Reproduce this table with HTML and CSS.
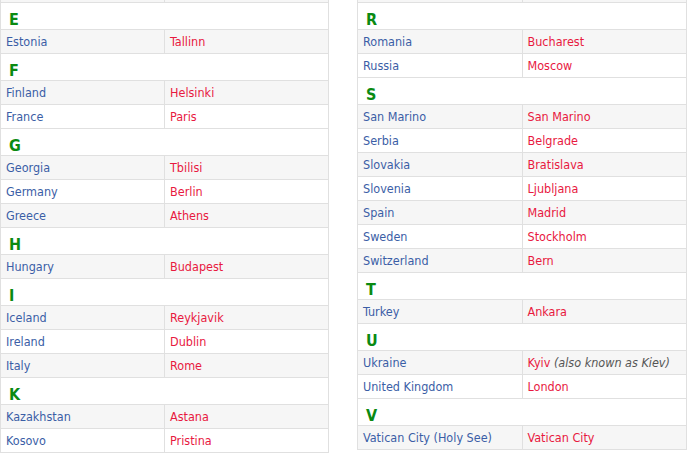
FILE: index.html
```html
<!DOCTYPE html>
<html>
<head>
<meta charset="utf-8">
<link rel="stylesheet" href="styles.css">
</head>
<body>
<div class="page">
  <table class="caps">
    <tbody>
      <tr class="alt"><td class="country"></td><td class="capital"></td></tr>
    </tbody>
    <tbody>
      <tr class="letter"><th colspan="2">E</th></tr>
      <tr class="alt"><td class="country">Estonia</td><td class="capital">Tallinn</td></tr>
    </tbody>
    <tbody>
      <tr class="letter"><th colspan="2">F</th></tr>
      <tr class="alt"><td class="country">Finland</td><td class="capital">Helsinki</td></tr>
      <tr class="strong"><td class="country">France</td><td class="capital">Paris</td></tr>
    </tbody>
    <tbody>
      <tr class="letter"><th colspan="2">G</th></tr>
      <tr class="alt"><td class="country">Georgia</td><td class="capital">Tbilisi</td></tr>
      <tr><td class="country">Germany</td><td class="capital">Berlin</td></tr>
      <tr class="alt strong"><td class="country">Greece</td><td class="capital">Athens</td></tr>
    </tbody>
    <tbody>
      <tr class="letter"><th colspan="2">H</th></tr>
      <tr class="alt"><td class="country">Hungary</td><td class="capital">Budapest</td></tr>
    </tbody>
    <tbody>
      <tr class="letter"><th colspan="2">I</th></tr>
      <tr class="alt strong"><td class="country">Iceland</td><td class="capital">Reykjavik</td></tr>
      <tr><td class="country">Ireland</td><td class="capital">Dublin</td></tr>
      <tr class="alt"><td class="country">Italy</td><td class="capital">Rome</td></tr>
    </tbody>
    <tbody>
      <tr class="letter"><th colspan="2">K</th></tr>
      <tr class="alt strong"><td class="country">Kazakhstan</td><td class="capital">Astana</td></tr>
      <tr><td class="country">Kosovo</td><td class="capital">Pristina</td></tr>
    </tbody>
  </table>

  <table class="caps">
    <tbody>
      <tr class="alt"><td class="country"></td><td class="capital"></td></tr>
    </tbody>
    <tbody>
      <tr class="letter"><th colspan="2">R</th></tr>
      <tr class="alt"><td class="country">Romania</td><td class="capital">Bucharest</td></tr>
      <tr><td class="country">Russia</td><td class="capital">Moscow</td></tr>
    </tbody>
    <tbody>
      <tr class="letter"><th colspan="2">S</th></tr>
      <tr class="alt"><td class="country">San Marino</td><td class="capital">San Marino</td></tr>
      <tr><td class="country">Serbia</td><td class="capital">Belgrade</td></tr>
      <tr class="alt"><td class="country">Slovakia</td><td class="capital">Bratislava</td></tr>
      <tr><td class="country">Slovenia</td><td class="capital">Ljubljana</td></tr>
      <tr class="alt strong"><td class="country">Spain</td><td class="capital">Madrid</td></tr>
      <tr><td class="country">Sweden</td><td class="capital">Stockholm</td></tr>
      <tr class="alt"><td class="country">Switzerland</td><td class="capital">Bern</td></tr>
    </tbody>
    <tbody>
      <tr class="letter"><th colspan="2">T</th></tr>
      <tr class="alt"><td class="country">Turkey</td><td class="capital">Ankara</td></tr>
    </tbody>
    <tbody>
      <tr class="letter"><th colspan="2">U</th></tr>
      <tr class="alt"><td class="country">Ukraine</td><td class="capital">Kyiv <i class="note">(also known as Kiev)</i></td></tr>
      <tr><td class="country">United Kingdom</td><td class="capital">London</td></tr>
    </tbody>
    <tbody>
      <tr class="letter"><th colspan="2">V</th></tr>
      <tr class="alt"><td class="country">Vatican City (Holy See)</td><td class="capital">Vatican City</td></tr>
    </tbody>
  </table>
</div>
</body>
</html>
```

FILE: styles.css
```css
html, body {
  margin: 0;
  padding: 0;
  background: #ffffff;
}

body {
  font-family: "DejaVu Sans Condensed", "DejaVu Sans", sans-serif;
  font-size: 12.5px;
}

.page {
  display: flex;
  gap: 28px;
  align-items: flex-start;
  margin-top: -22px;
}

.caps {
  border-collapse: collapse;
  table-layout: fixed;
  border: 1px solid #cfcfcf;
  width: 329px;
}

.caps:last-child {
  width: 330px;
}

.caps td {
  width: 50%;
  height: 24px;
  box-sizing: border-box;
  padding: 1px 5px 0;
  line-height: 16px;
  border: 1px solid #e0e0e0;
  white-space: nowrap;
  vertical-align: middle;
}

.caps tr.alt td {
  background: #f6f6f6;
}

.caps tr.strong td {
  border-top: 1px solid #d2d2d2;
}

.caps th {
  height: 27px;
  box-sizing: border-box;
  padding: 7px 8px 0;
  text-align: left;
  vertical-align: middle;
  font-size: 16px;
  line-height: 18px;
  font-weight: bold;
  color: #0a8a12;
  background: #ffffff;
  border: 1px solid #e0e0e0;
}

.country {
  color: #3b5ea6;
}

.capital {
  color: #e8193f;
}

.note {
  color: #555555;
  font-style: italic;
}
```
